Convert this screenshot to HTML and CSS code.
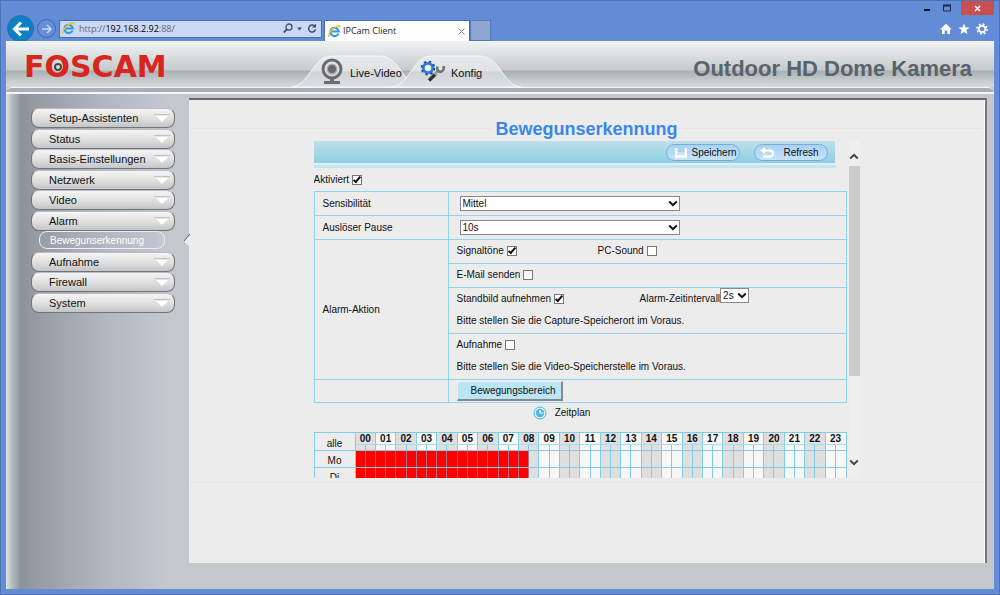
FILE: index.html
```html
<!DOCTYPE html>
<html lang="de">
<head>
<meta charset="utf-8">
<title>IPCam Client</title>
<link rel="stylesheet" href="styles.css">
</head>
<body>
<svg class="defs" width="0" height="0" aria-hidden="true">
  <symbol id="ie" viewBox="0 0 14 14">
    <path d="M11.3 9.2A4.5 4.5 0 1 1 11.6 7H4" fill="none" stroke="#2f9be0" stroke-width="2.3"/>
    <path d="M1.2 12.8C-.6 10.8 3.5 4.6 8 2.2c3-1.700 5.200-1.500 4.800.6" fill="none" stroke="#f2c21d" stroke-width="1.500"/>
  </symbol>
  <symbol id="chevron" viewBox="0 0 10 7"><path d="M1.200 1.500 5 5.200 8.800 1.500" fill="none" stroke="currentColor" stroke-width="2"/></symbol>
  <linearGradient id="tabfill" x1="0" y1="0" x2="0" y2="1"><stop offset="0" stop-color="#e9ebec"/><stop offset=".48" stop-color="#dfe1e3"/><stop offset=".52" stop-color="#d0d3d8"/><stop offset="1" stop-color="#dddfe4"/></linearGradient>
</svg>

<div class="titlebar">
  <button class="win" aria-label="Minimieren"><svg width="8" height="8"><path d="M1 6h6" stroke="#111" stroke-width="2"/></svg></button>
  <button class="win" aria-label="Maximieren"><svg width="8" height="8"><path d="M.5 1.500h7v5.500h-7z" fill="none" stroke="#1c2740"/><path d="M0 1.500h8" stroke="#1c2740" stroke-width="2"/></svg></button>
  <button class="win close" aria-label="Schließen"><svg width="7" height="7"><path d="M1 1l5 5M6 1 1 6" stroke="#fff" stroke-width="1.500"/></svg></button>
</div>

<div class="browserbar">
  <button class="round back" aria-label="Zurück"><svg width="18" height="16" viewBox="0 0 18 16"><path d="M17 8H3M9 1.500 2.500 8 9 14.500" fill="none" stroke="#fff" stroke-width="3"/></svg></button>
  <button class="round forward" aria-label="Vorwärts"><svg width="12" height="10" viewBox="0 0 12 10"><path d="M1 5h9M6 1l4 4-4 4" fill="none" stroke="#c3d7f5" stroke-width="1.600"/></svg></button>
  <div class="address">
    <svg width="13" height="13"><use href="#ie"/></svg>
    <span class="url">http://<b>192.168.2.92</b>:88/</span>
    <svg width="10" height="11" viewBox="0 0 10 11"><circle cx="6" cy="4" r="3" fill="none" stroke="#44506a" stroke-width="1.300"/><path d="M4 6.200.8 9.500" stroke="#44506a" stroke-width="1.800"/></svg>
    <svg width="6" height="4"><path d="M0 .5h5L2.500 3.500z" fill="#44506a"/></svg>
    <svg width="10" height="11" viewBox="0 0 10 11"><path d="M8 3.500A3.500 3.500 0 1 0 8.500 6.500" fill="none" stroke="#44506a" stroke-width="1.500"/><path d="M9 .5v4H5z" fill="#44506a"/></svg>
  </div>
  <div class="browsertab">
    <svg width="13" height="13"><use href="#ie"/></svg>
    <span class="tabname">IPCam Client</span>
    <svg width="7" height="7"><path d="M.5.5l6 6M6.500.5l-6 6" stroke="#888"/></svg>
  </div>
  <button class="newtab" aria-label="Neue Registerkarte"></button>
  <div class="tools">
    <svg width="12" height="12" viewBox="0 0 12 12"><path d="M6 .8 11.500 6l-.8.800-.7-.6V11H7.300V7.500H4.700V11H2V6.200l-.7.600L.5 6z" fill="#fff"/></svg>
    <svg width="12" height="12" viewBox="0 0 12 12"><path d="m6 .5 1.500 3.800 4.200.2-3.300 2.600 1.100 4L6 8.900l-3.500 2.200 1.100-4L.3 4.500l4.200-.2z" fill="#fff"/></svg>
    <svg width="12" height="12" viewBox="0 0 12 12"><circle cx="6" cy="6" r="3.200" fill="none" stroke="#fff" stroke-width="1.700"/><circle cx="6" cy="6" r="4.900" fill="none" stroke="#fff" stroke-width="1.800" stroke-dasharray="1.900 1.948"/></svg>
  </div>
</div>

<div class="page">
  <header class="header">
    <div class="logo">F<span class="lensletter">O<svg class="lens" width="10" height="10" viewBox="0 0 10 10"><circle cx="5" cy="5" r="4.500" fill="#eee"/><circle cx="5" cy="5" r="3" fill="#ddd" stroke="#444" stroke-width="2"/></svg></span>SCAM</div>
    <nav class="tabs">
      <a class="tab" href="#live">
        <svg class="tabshape" viewBox="0 0 130 32" preserveAspectRatio="none"><path d="M0 32C19 31 21 1 41 1H89C109 1 112 31 130 32z" fill="url(#tabfill)" stroke="#f5f7f8"/></svg>
        <svg class="tabicon" width="24" height="27" viewBox="0 0 24 27"><circle cx="12" cy="11" r="9" fill="none" stroke="#6b6b6d" stroke-width="3"/><circle cx="12" cy="11" r="4.700" fill="#6b6b6d" stroke="#aaa" stroke-width="1.500"/><path d="M10 20h4v3h6v3H4v-3h6z" fill="#6b6b6d"/></svg>
        <span>Live-Video</span>
      </a>
      <a class="tab" href="#konfig">
        <svg class="tabshape" viewBox="0 0 130 32" preserveAspectRatio="none"><path d="M0 32C19 31 21 1 41 1H89C109 1 112 31 130 32z" fill="url(#tabfill)" stroke="#f5f7f8"/></svg>
        <svg class="tabicon" width="25" height="22" viewBox="0 0 25 22"><circle cx="8" cy="8" r="4.700" fill="#e8f2fb" stroke="#2a7bd8" stroke-width="2.800"/><circle cx="8" cy="8" r="6.500" fill="none" stroke="#174a91" stroke-width="1.600" stroke-dasharray="2.500 2.600"/><path d="M9 20.500 15.500 14" stroke="#333" stroke-width="3.400"/><path d="M14.500 14.500l3.500-3.500" stroke="#999" stroke-width="2.500"/><path d="M17.500 6.500c-1 4 1.500 6 4 5 2-.8 2.600-3 2.100-5.500" fill="none" stroke="#707275" stroke-width="2.500"/></svg>
        <span>Konfig</span>
      </a>
    </nav>
    <div class="product">Outdoor HD Dome Kamera</div>
  </header>
  <div class="band"></div>

  <div class="body">
    <aside class="sidebar">
      <ul class="menu">
        <li><button class="item">Setup-Assistenten</button></li>
        <li><button class="item">Status</button></li>
        <li><button class="item">Basis-Einstellungen</button></li>
        <li><button class="item">Netzwerk</button></li>
        <li><button class="item">Video</button></li>
        <li><button class="item">Alarm</button></li>
        <li><a class="subitem" href="#bewegung">Bewegunserkennung</a></li>
        <li><button class="item">Aufnahme</button></li>
        <li><button class="item">Firewall</button></li>
        <li><button class="item">System</button></li>
      </ul>
    </aside>

    <main class="frame">
      <svg class="notch" width="7" height="14" viewBox="0 0 7 14"><path d="M7 0 1 7l6 7z" fill="#ececec"/><path d="M7 0 1 7" stroke="#555"/></svg>
      <section class="panel">
        <h1 class="title">Bewegunserkennung</h1>
        <div class="pane">
          <div class="view">
            <div class="toolbar">
              <button class="pill"><svg width="14" height="12" viewBox="0 0 14 12"><path d="M1 1h12v10H1z" fill="#f4faff"/><path d="M4 1h6v4H4zM3 7h8" fill="#b4d5ee" stroke="#a5cbe8"/></svg>Speichern</button>
              <button class="pill refresh"><svg width="15" height="12" viewBox="0 0 15 12"><path d="M4 3.500h6a3 3 0 0 1 0 6H3" fill="none" stroke="#fff" stroke-width="2.300"/><path d="M0 3.500 5 0v7z" fill="#fff"/></svg>Refresh</button>
            </div>
            <div class="strip"></div>
            <div class="enable"><label for="aktiv">Aktiviert</label><input id="aktiv" type="checkbox" checked></div>

            <table class="settings">
              <colgroup><col class="namecol"><col></colgroup>
              <tr class="row"><th><label for="sens">Sensibilität</label></th><td><span class="pick wide"><select id="sens"><option>Mittel</option></select><svg><use href="#chevron"/></svg></span></td></tr>
              <tr class="row"><th><label for="pause">Auslöser Pause</label></th><td><span class="pick wide"><select id="pause"><option>10s</option></select><svg><use href="#chevron"/></svg></span></td></tr>
              <tr class="row"><th rowspan="4">Alarm-Aktion</th><td><div class="line"><span class="first"><label for="ton">Signaltöne</label><input id="ton" type="checkbox" checked></span><label for="pc">PC-Sound</label><input id="pc" type="checkbox"></div></td></tr>
              <tr class="row"><td><div class="line"><label for="mail">E-Mail senden</label><input id="mail" type="checkbox"></div></td></tr>
              <tr class="tall"><td><div class="line"><span class="first far"><label for="bild">Standbild aufnehmen</label><input id="bild" type="checkbox" checked></span><label for="zeit">Alarm-Zeitintervall</label><span class="pick small"><select id="zeit"><option>2s</option></select><svg><use href="#chevron"/></svg></span></div><div class="line">Bitte stellen Sie die Capture-Speicherort im Voraus.</div></td></tr>
              <tr class="tall"><td><div class="line"><label for="auf">Aufnahme</label><input id="auf" type="checkbox"></div><div class="line">Bitte stellen Sie die Video-Speicherstelle im Voraus.</div></td></tr>
              <tr class="last"><th></th><td><button class="area">Bewegungsbereich</button></td></tr>
            </table>

            <div class="plan"><svg width="14" height="14" viewBox="0 0 14 14"><circle cx="7" cy="7" r="6" fill="none" stroke="#4db8e0"/><circle cx="7" cy="7" r="4.200" fill="#4db8e0"/><path d="M7 4v3h3" fill="none" stroke="#fff" stroke-width="1.200"/></svg>Zeitplan</div>
            <table class="schedule" id="schedule"></table>
          </div>
          <div class="scrollbar">
            <button aria-label="Nach oben"><svg class="up" width="10" height="7"><use href="#chevron"/></svg></button>
            <div class="track"><div class="thumb"></div></div>
            <button aria-label="Nach unten"><svg width="10" height="7"><use href="#chevron"/></svg></button>
          </div>
        </div>
      </section>
    </main>
  </div>
</div>
<script src="schedule.js"></script>
</body>
</html>
```
FILE: styles.css
```css
* { box-sizing: border-box; }
body {
  margin: 0;
  min-height: 100vh;
  display: flex;
  flex-direction: column;
  padding: 0 5px 5px;
  border: 1px solid #4c74b5;
  background: #628cd5;
  color: #111;
  font: 10px/12px "Liberation Sans", Arial, sans-serif;
}
button, select, input { font: inherit; color: inherit; margin: 0; padding: 0; }
button { border: 0; background: none; }
a { color: inherit; text-decoration: none; }
svg { display: block; flex: none; }
.defs { position: absolute; }

/* Browser window */
.titlebar { display: flex; justify-content: flex-end; height: 15px; }
.win { display: flex; align-items: center; justify-content: center; width: 20px; height: 14px; }
.close { width: 33px; margin-left: 4px; background: #c94f50; }
.browserbar { display: flex; align-items: center; height: 25px; }
.round { display: flex; flex: none; align-items: center; justify-content: center; border-radius: 50%; }
.back { width: 27px; height: 27px; margin-left: 1px; background: #0b80c6; border: 1px solid #3a68ae; }
.forward { width: 19px; height: 19px; margin: 0 3px 0 3px; border: 1px solid #3f68ae; background: #688fd6; }
.address {
  display: flex; align-items: center; gap: 4px;
  width: 263px; height: 18px; padding: 0 4px 0 2px;
  background: #cad8f3; border: 1px solid #486fae;
}
.url { flex: 1; color: #667; font: 9px/12px "Open Sans", sans-serif; }
.url b { font-weight: 400; color: #000; }
.browsertab {
  display: flex; align-items: center; gap: 2px; align-self: flex-end;
  width: 146px; height: 21px; margin-left: 2px; padding: 0 4px 0 3px;
  background: #fff; border: 1px solid #486fae; border-bottom: 0;
}
.tabname { flex: 1; color: #222; font: 9px/12px "Open Sans", sans-serif; }
.newtab { align-self: flex-end; width: 21px; height: 21px; background: #8fa6d2; border: 1px solid #5478b8; }
.tools { display: flex; gap: 6px; margin-left: auto; padding-right: 6px; }

/* Page header */
.page { flex: 1; display: flex; flex-direction: column; background: #c4c7cc; }
.header {
  display: flex; align-items: flex-end; height: 46px; padding: 0 22px 0 18px;
  background: linear-gradient(#f0f4f5, #c7cacb 29px, #aab1b4 30px, #d9dcdd 46px);
}
.logo { align-self: center; width: 267px; padding-top: 6px; color: #d7261e; font: bold 30px/32px "DejaVu Sans", sans-serif; }
.lensletter { position: relative; }
.lens { position: absolute; left: 8px; top: 13px; }
.tabs { display: flex; }
.tab { position: relative; display: flex; align-items: center; gap: 6px; height: 32px; width: 130px; padding-left: 29px; font-size: 11px; line-height: 12px; }
.tab + .tab { margin-left: -30px; }
.tab > * { position: relative; }
.tab > span { padding-top: 3px; }
.tab .tabshape { position: absolute; left: 0; top: 0; width: 100%; height: 100%; }
.product { margin-left: auto; padding-bottom: 6px; color: #5a636b; font-weight: bold; font-size: 22px; line-height: 24px; }
.band { height: 7px; border-top: 1px solid #f4f5f6; border-bottom: 2px solid #f4f5f6; border-radius: 6px 6px 0 0; background: #a9aeb7; }

/* Navigation column */
.body { flex: 1; display: flex; }
.sidebar {
  flex: none; width: 183px; padding: 14px 14px 0 25px;
  background: linear-gradient(90deg, #dde5e4, #b4bdbd 6px, #8a929a 15px, #979ba4 32px, #b3b7c1 100px, #c0c4cf 150px, #c4c7cc 158px);
}
.menu { display: grid; grid-template-rows: repeat(10, 1fr); height: 205px; margin: 0; padding: 0; list-style: none; }
.item {
  display: block; position: relative; width: 100%; height: 20px; padding: 0 0 0 17px; text-align: left;
  font-size: 11px; line-height: 18px; border: 1px solid #70757c; border-top-color: #b9bdc3; border-radius: 8px;
  background: linear-gradient(#f5f5f5, #dcdcdc 60%, #c4c5c7);
}
.item::after {
  content: ""; position: absolute; right: 6px; top: 7px;
  border: 6px solid transparent; border-top: 6px solid #fff; border-bottom: 0;
}
.item::before { content: ""; position: absolute; right: 4px; top: 5px; width: 16px; height: 1px; background: #c3c3c4; }
.subitem {
  display: block; height: 18px; margin: 0 10px 0 8px; padding-left: 10px;
  color: #fff; line-height: 17px; border: 1px solid #eceef2; border-radius: 8px;
}

/* Content */
.frame {
  position: relative; flex: 1; min-width: 0; margin: 4px 7px 26px 0; padding-top: 28px;
  background: #ececec; border-top: 2px solid #6b6b6e; border-right: 2px solid #77777a;
  box-shadow: inset -1px 0 #fff;
}
.notch { position: absolute; left: -6px; top: 134px; }
.panel { margin: 0 3px 0 2px; padding-bottom: 4px; border: solid #e3e3e3; border-width: 1px 0; }
.title { width: max-content; margin: -10px auto 2px; padding: 0 4px; background: #ececec; color: #3a87e8; font-size: 18px; line-height: 20px; }
.pane { display: flex; gap: 2px; max-width: 546px; height: 337px; margin: 0 auto; }
.view { flex: 1; min-width: 0; overflow: hidden; }
.toolbar {
  display: flex; align-items: center; justify-content: flex-end; gap: 14px; height: 22px;
  margin-right: 12px; padding-right: 7px; background: linear-gradient(#bfe0e9, #8ccfe6);
}
.pill {
  display: flex; align-items: center; gap: 4px; width: 74px; height: 17px; padding: 1px 4px 0 7px;
  border: 1px solid #76aedb; border-radius: 9px; background: linear-gradient(#a9d2f1, #c5e3f8);
}
.refresh { gap: 9px; padding-left: 5px; }
.strip { height: 3px; margin: 2px 12px 0 0; background: #bfe6f2; }
.enable { display: flex; align-items: center; gap: 3px; height: 23px; }
input[type="checkbox"] { appearance: none; position: relative; flex: none; width: 10px; height: 10px; border: 1px solid #777; background: #fff; }
input[type="checkbox"]:checked::after {
  content: ""; position: absolute; left: 2px; top: -1px; width: 4px; height: 8px;
  border: solid #111; border-width: 0 2px 2px 0; transform: rotate(40deg);
  box-sizing: border-box;
}
table { width: 100%; table-layout: fixed; border-collapse: collapse; }
.settings th, .settings td { padding: 0 8px; border: 1px solid #92d4ea; font-weight: 400; text-align: left; }
.namecol { width: 134px; }
.row { height: 24px; }
.tall { height: 46px; }
.last { height: 23px; }
.line { display: flex; align-items: center; gap: 3px; height: 22px; padding-bottom: 2px; }
.first { display: flex; align-items: center; gap: 3px; width: 138px; }
.far { width: 180px; }
.pick { position: relative; display: block; }
.wide { width: 220px; margin-left: 3px; }
.pick select {
  display: block; appearance: none; width: 100%; height: 15px; padding: 0 2px; line-height: 13px;
  border: 1px solid #85888c; border-radius: 0; background: #fff;
}
.pick svg { position: absolute; right: 2px; top: 4px; width: 10px; height: 7px; pointer-events: none; }
.small { width: 29px; margin: -6px 0 0 -3px; }
.area {
  display: block; width: 106px; height: 20px; padding-left: 8px; background: #bbe5f3;
  border: solid; border-width: 1px 2px 2px 1px; border-color: #e4f5fa #85898c #85898c #e4f5fa;
}
.plan { display: flex; align-items: center; justify-content: center; gap: 8px; height: 20px; margin: 0 37px 9px 0; }

/* Weekly schedule */
.schedule th, .schedule td { padding: 0; border: 1px solid #83cce6; font-size: 10px; line-height: 10px; text-align: center; }
.schedule th { font-weight: 400; }
.schedule .hour { height: 12px; font-weight: bold; border-bottom-color: #a6dcee; }
.schedule .half { height: 6px; }
.schedule .day { height: 17px; padding-top: 3px; }
.schedule .all { padding-top: 4px; }
.daycol { width: 41px; }
.even { background: #dfdfdf; }
.odd { background: #f7f7f7; }
.schedule .on { background: #f00; border-left-color: #ad7186; border-right-color: #ad7186; }

/* Scrollbar */
.scrollbar { display: flex; flex-direction: column; width: 11px; background: #efefef; }
.scrollbar button { display: flex; align-items: center; justify-content: center; height: 25px; padding-top: 6px; color: #444; }
.scrollbar button:last-child { padding: 0 0 6px; }
.up { transform: rotate(180deg); }
.track { flex: 1; }
.thumb { height: 73%; background: #cbcbcb; }
```
FILE: schedule.js
```js
// Builds the weekly grid: 24 hours, two half-hour cells each.
const table = document.getElementById("schedule");
const shade = (hour) => (hour % 2 ? "odd" : "even");
const hours = [...Array(24).keys()];
const halves = [...Array(48).keys()];

const cols = '<colgroup><col class="daycol">' + "<col>".repeat(48) + "</colgroup>";
const head = '<tr><th rowspan="2" class="all">alle</th>' +
  hours.map((h) => `<th colspan="2" class="hour ${shade(h)}">${String(h).padStart(2, "0")}</th>`).join("") + "</tr>";
const ticks = "<tr>" + halves.map((i) => `<td class="half ${shade(i >> 1)}"></td>`).join("") + "</tr>";
const days = ["Mo", "Di"].map((day) =>
  `<tr><th class="day">${day}</th>` +
  halves.map((i) => `<td class="${i < 17 ? "on" : shade(i >> 1)}"></td>`).join("") + "</tr>").join("");

table.innerHTML = cols + head + ticks + days;
```
